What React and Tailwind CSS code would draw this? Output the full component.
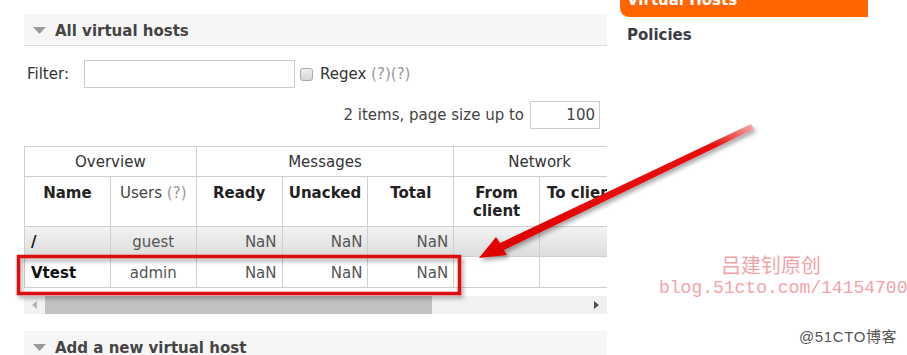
import React from 'react'

const font = "font-['DejaVu_Sans','Liberation_Sans',sans-serif]"

function SectionHeader({ title, className = '' }) {
  return (
    <div className={`h-[32px] shrink-0 bg-[#f6f6f6] border-b border-[#dcdcdc] flex items-center pt-[3px] ${className}`}>
      <svg width="13" height="8" viewBox="0 0 13 8" className="ml-[9px]">
        <path d="M0 0 L13 0 L6.5 7 Z" fill="#9a9a9a" />
      </svg>
      <span className="ml-[9px] text-[15px] font-bold text-[#444]">{title}</span>
    </div>
  )
}

export default function App() {
  const cell = 'border border-[#cfcfcf]'
  const head = `${cell} w-[86px] align-top pt-[7px] leading-[18px]`
  const rows = [
    { name: '/', user: 'guest', bg: 'bg-gradient-to-b from-[#f3f3f3] to-[#dcdcdc]', h: 'h-[30px]' },
    { name: 'Vtest', user: 'admin', bg: 'bg-white', h: 'h-[31px]' },
  ]

  return (
    <div className={`relative w-[907px] h-[355px] overflow-hidden bg-white flex ${font} text-[#333]`}>
      {/* left panel */}
      <div className="ml-[24px] w-[583px] flex flex-col shrink-0">
        <SectionHeader title="All virtual hosts" className="mt-[14px]" />

        {/* filter */}
        <div className="mt-[14px] h-[28px] shrink-0 flex items-center text-[15px]">
          <span className="w-[60px] pl-[3px] text-[#333]">Filter:</span>
          <input className="w-[211px] h-[28px] border border-[#ccc] outline-none" />
          <span className="ml-[5px] w-[13px] h-[13px] rounded-[3px] border border-[#aaa] bg-gradient-to-b from-[#eee] to-[#d6d6d6]" />
          <span className="ml-[7px] text-[#333]">Regex <span className="text-[#999]">(?)(?)</span></span>
        </div>

        {/* page size */}
        <div className="mt-[13px] h-[28px] shrink-0 flex justify-end items-center pr-[7px] text-[15px]">
          <span className="text-[#444]">2 items, page size up to</span>
          <div className="ml-[6px] w-[70px] h-[28px] border border-[#ccc] flex items-center justify-end pr-[4px] text-[#444]">100</div>
        </div>

        <div className="mt-[17px] w-[583px] shrink-0 overflow-hidden">
          <table className="border-collapse table-fixed w-[602px] text-[15px]">
            <thead>
              <tr className="h-[30px]">
                <th colSpan={2} className={`${cell} font-normal text-[#333] pt-[2px]`}>Overview</th>
                <th colSpan={3} className={`${cell} font-normal text-[#333] pt-[2px]`}>Messages</th>
                <th colSpan={2} className={`${cell} font-normal text-[#333] pt-[2px]`}>Network</th>
              </tr>
              <tr className="h-[50px]">
                <th className={`${head} text-[#222]`}>Name</th>
                <th className={`${head} font-normal text-[#444]`}>Users <span className="text-[#999]">(?)</span></th>
                <th className={`${head} text-[#222]`}>Ready</th>
                <th className={`${head} text-[#222]`}>Unacked</th>
                <th className={`${head} text-[#222]`}>Total</th>
                <th className={`${head} text-[#222]`}>From<br />client</th>
                <th className={`${head} text-[#222] whitespace-nowrap text-left pl-[7px]`}>To client</th>
              </tr>
            </thead>
            <tbody>
              {rows.map(r => (
                <tr key={r.name} className={`${r.h} ${r.bg}`}>
                  <td className={`${cell} pt-[2px] pl-[6px] font-bold text-[#111]`}>{r.name}</td>
                  <td className={`${cell} pt-[2px] text-center text-[#555]`}>{r.user}</td>
                  <td className={`${cell} pt-[2px] text-right pr-[5px] text-[#555]`}>NaN</td>
                  <td className={`${cell} pt-[2px] text-right pr-[5px] text-[#555]`}>NaN</td>
                  <td className={`${cell} pt-[2px] text-right pr-[5px] text-[#555]`}>NaN</td>
                  <td className={cell}></td>
                  <td className={cell}></td>
                </tr>
              ))}
            </tbody>
          </table>
        </div>

        {/* scrollbar */}
        <div className="mt-[8px] h-[18px] shrink-0 bg-[#f1f1f1] flex items-center">
          <div className="w-[21px] flex justify-center">
            <svg width="5" height="8" viewBox="0 0 5 8"><path d="M5 0 L0 4 L5 8 Z" fill="#b5b5b5" /></svg>
          </div>
          <div className="w-[387px] h-[18px] bg-[#c1c1c1]" />
          <div className="flex-1" />
          <div className="w-[21px] flex justify-center">
            <svg width="5" height="8" viewBox="0 0 5 8"><path d="M0 0 L5 4 L0 8 Z" fill="#505050" /></svg>
          </div>
        </div>

        <SectionHeader title="Add a new virtual host" className="mt-[17px]" />
      </div>

      {/* right nav */}
      <div className="ml-[13px] w-[248px] flex flex-col shrink-0">
        <div className="h-[17px] shrink-0 bg-[#ff6600] rounded-bl-[9px] overflow-hidden">
          <div className="pl-[7px] -mt-[10px] text-[15px] font-bold text-white leading-[20px]">Virtual Hosts</div>
        </div>
        <div className="mt-[7px] pl-[7px] text-[15px] font-bold text-[#3b3b46]">Policies</div>
      </div>

      {/* annotations */}
      <svg className="absolute left-0 top-0 pointer-events-none" width="907" height="355" viewBox="0 0 907 355">
        <defs>
          <filter id="sh" x="-10%" y="-10%" width="130%" height="140%">
            <feDropShadow dx="2" dy="3" stdDeviation="2" floodColor="#000" floodOpacity="0.35" />
          </filter>
          <linearGradient id="ar" x1="0" y1="1" x2="1" y2="0">
            <stop offset="0" stopColor="#e00000" />
            <stop offset="0.85" stopColor="#e81010" />
            <stop offset="1" stopColor="#f3b0b0" />
          </linearGradient>
        </defs>
        <rect x="18.5" y="256.5" width="441" height="37" fill="none" stroke="#dd0a0a" strokeWidth="3.5" filter="url(#sh)" />
        <polygon
          points="479,258 496,237 500,243 751,124 754,129 504,250 507,255"
          fill="url(#ar)"
          filter="url(#sh)"
        />
      </svg>

      {/* watermarks */}
      <div className="absolute left-[721px] top-[253px] text-[20px] leading-[24px] text-[#f2a3aa] font-['Noto_Sans_CJK_SC',sans-serif]">吕建钊原创</div>
      <div className="absolute left-[659px] top-[277px] text-[18px] leading-[22px] text-[#f2a3aa] font-['Liberation_Mono',monospace]">blog.51cto.com/14154700</div>
      <div className="absolute left-[799px] top-[328px] text-[15px] tracking-[0.6px] leading-[18px] text-[#555] font-['Liberation_Sans','Noto_Sans_CJK_SC',sans-serif]">@51CTO博客</div>
    </div>
  )
}
